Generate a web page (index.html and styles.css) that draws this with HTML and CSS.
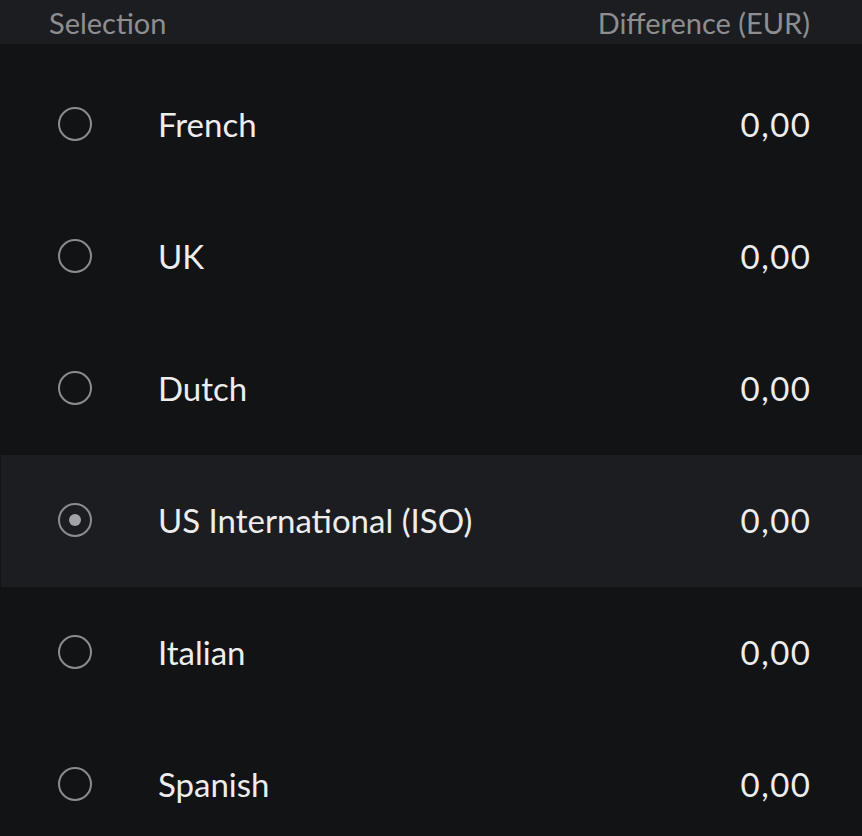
FILE: index.html
```html
<!DOCTYPE html>
<html lang="en">
<head>
    <meta charset="UTF-8">
    <meta name="viewport" content="width=device-width, initial-scale=1.0">
    <title>Keyboard Layout</title>
    <link rel="stylesheet" href="styles.css">
</head>
<body>
    <div class="layout-table">
        <div class="table-head">
            <span>Selection</span>
            <span>Difference (EUR)</span>
        </div>

        <div class="table-body">
            <label class="layout-row">
                <input type="radio" name="layout">
                <span class="row-name">French</span>
                <span class="row-price">0,00</span>
            </label>
            <label class="layout-row">
                <input type="radio" name="layout">
                <span class="row-name">UK</span>
                <span class="row-price">0,00</span>
            </label>
            <label class="layout-row">
                <input type="radio" name="layout">
                <span class="row-name">Dutch</span>
                <span class="row-price">0,00</span>
            </label>
            <label class="layout-row selected">
                <input type="radio" name="layout" checked>
                <span class="row-name">US International (ISO)</span>
                <span class="row-price">0,00</span>
            </label>
            <label class="layout-row">
                <input type="radio" name="layout">
                <span class="row-name">Italian</span>
                <span class="row-price">0,00</span>
            </label>
            <label class="layout-row">
                <input type="radio" name="layout">
                <span class="row-name">Spanish</span>
                <span class="row-price">0,00</span>
            </label>
        </div>
    </div>
</body>
</html>
```

FILE: styles.css
```css
body {
    margin: 0;
    background-color: #121315;
    font-family: Lato, 'Noto Sans', sans-serif;
    color: #ededed;
    overflow: hidden;
}
.table-head {
    display: flex;
    justify-content: space-between;
    align-items: center;
    height: 44px;
    padding: 0 52px 0 49px;
    background-color: #1c1d21;
    color: #8e8e90;
    font-size: 29px;
}
.table-body {
    padding-top: 15px;
}
.layout-row {
    display: grid;
    grid-template-columns: 100px 1fr auto;
    align-items: center;
    height: 132px;
    padding: 0 52px 0 57px;
    margin-left: 1px;
    font-size: 33px;
    line-height: 1;
    cursor: pointer;
}
.layout-row.selected {
    background-color: #1c1d21;
}
.layout-row input {
    appearance: none;
    width: 34px;
    height: 34px;
    margin: 0 0 2px;
    border: 2px solid #8c8c8e;
    border-radius: 50%;
    box-sizing: border-box;
    display: grid;
    place-items: center;
    cursor: pointer;
}
.layout-row input:checked::after {
    content: '';
    width: 12px;
    height: 12px;
    border-radius: 50%;
    background-color: #a3a3a5;
}
.row-name {
    padding-bottom: 2px;
}
.row-price {
    text-align: right;
    letter-spacing: 1.5px;
    margin-right: -1.5px;
    padding-bottom: 2px;
}
```
